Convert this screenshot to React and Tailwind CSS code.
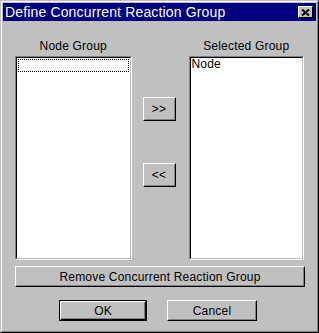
import React from "react";

const font = { fontFamily: '"Liberation Sans", Arial, sans-serif' };

// raised win95 button edge
const RaisedButton = ({ children, className = "", isDefault = false }) => {
  const inner = (
    <div className="h-full w-full border border-t-white border-l-white border-b-black border-r-black">
      <div className="flex h-full w-full items-center justify-center border border-t-[#c0c0c0] border-l-[#c0c0c0] border-b-[#808080] border-r-[#808080] text-[12px] tracking-[0.2px] text-black">
        {children}
      </div>
    </div>
  );
  if (isDefault) {
    return <div className={`border border-black ${className}`}>{inner}</div>;
  }
  return <div className={className}>{inner}</div>;
};

const ListBox = ({ className = "", children }) => (
  <div className={`border border-t-[#808080] border-l-[#808080] border-b-white border-r-white ${className}`}>
    <div className="h-full w-full border border-t-black border-l-black border-b-[#c0c0c0] border-r-[#c0c0c0] bg-white">
      {children}
    </div>
  </div>
);

export default function App() {
  return (
    <div className="h-[333px] w-[319px] bg-[#c0c0c0]" style={font}>
      <div className="h-full w-full border border-t-[#c0c0c0] border-l-[#c0c0c0] border-b-black border-r-black">
        <div className="h-full w-full border border-t-white border-l-white border-b-[#808080] border-r-[#808080] p-px">
          {/* title bar */}
          <div className="flex h-[18px] items-center justify-between bg-[#000080] pl-[2px] pr-[3px]">
            <span className="text-[14px] leading-none tracking-[0.15px] text-white">Define Concurrent Reaction Group</span>
            <div className="flex h-[12px] w-[15px] shrink-0 items-center justify-center border border-t-white border-l-white border-b-black border-r-black bg-[#c0c0c0]">
              <svg width="9" height="7" viewBox="0 0 9 7" className="shrink-0">
                <path d="M1 0.5L8 6.5M8 0.5L1 6.5" stroke="#000000" strokeWidth="2" fill="none" />
              </svg>
            </div>
          </div>

          <div className="px-[12px] pt-[18px]">
            <div className="flex">
              <div className="flex w-[117px] flex-col">
                <div className="h-[17px] text-center text-[12px] leading-[15px] tracking-[0.2px] text-black">Node Group</div>
                <ListBox className="h-[204px]">
                  <div className="mx-px mt-px h-[13px] border border-dotted border-black" />
                </ListBox>
              </div>

              <div className="ml-[11px] flex w-[33px] flex-col pt-[58px]">
                <RaisedButton className="h-[24px] w-[33px]">&gt;&gt;</RaisedButton>
                <RaisedButton className="mt-[42px] h-[24px] w-[33px]">&lt;&lt;</RaisedButton>
              </div>

              <div className="ml-[13px] flex w-[116px] flex-col">
                <div className="h-[17px] text-center text-[12px] leading-[15px] tracking-[0.2px] text-black">Selected Group</div>
                <ListBox className="h-[204px]">
                  <div className="pl-px text-[12px] leading-[13px] tracking-[0.2px] text-black">Node</div>
                </ListBox>
              </div>
            </div>

            <RaisedButton className="mt-[6px] h-[21px] w-[290px]">Remove Concurrent Reaction Group</RaisedButton>

            <div className="mt-[13px] flex">
              <RaisedButton isDefault className="ml-[44px] h-[21px] w-[88px]">OK</RaisedButton>
              <RaisedButton className="ml-[20px] h-[21px] w-[90px]">Cancel</RaisedButton>
            </div>
          </div>
        </div>
      </div>
    </div>
  );
}
